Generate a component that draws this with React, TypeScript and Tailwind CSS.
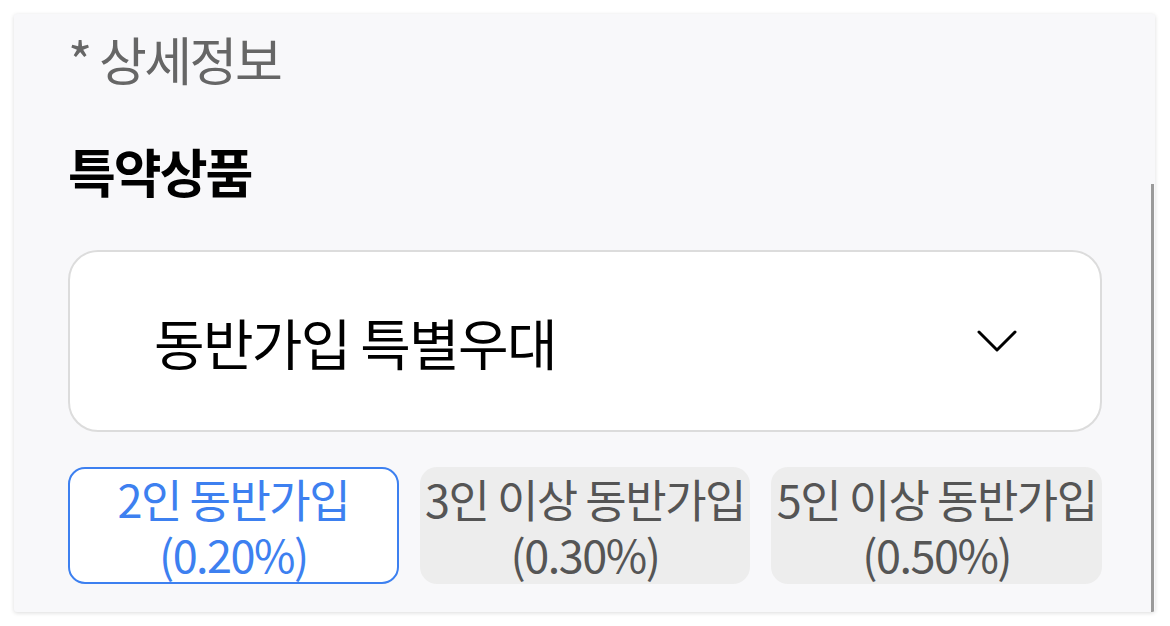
const options = [
  { label: "2인 동반가입", rate: "(0.20%)", selected: true },
  { label: "3인 이상 동반가입", rate: "(0.30%)", selected: false },
  { label: "5인 이상 동반가입", rate: "(0.50%)", selected: false },
];

const font = {
  fontFamily: '"Noto Sans CJK KR", "Noto Sans", sans-serif',
};

export default function App() {
  return (
    <div className="h-[626px] w-[1170px] bg-white p-[14px]" style={font}>
      <div className="relative h-[598px] w-[1141px] overflow-hidden rounded-[3px] bg-[#f8f8fa] pl-[54px] pr-[53px] shadow-[0_1px_4px_rgba(0,0,0,0.14)]">
        <p className="mt-[12px] text-[52px] leading-[66px] tracking-[-2.5px] text-[#666666]">
          * 상세정보
        </p>

        <h2 className="mt-[46px] text-[52px] font-bold leading-[66px] tracking-[-2px] text-black">
          특약상품
        </h2>

        <button
          type="button"
          className="mt-[46px] flex h-[182px] w-full items-center justify-between rounded-[30px] border-2 border-[#dcdcdc] bg-white pl-[84px] pr-[83px]"
        >
          <span className="text-[55px] leading-none tracking-[-1.7px] text-black">
            동반가입 특별우대
          </span>
          <svg
            aria-hidden="true"
            width="40"
            height="24"
            viewBox="0 0 40 24"
            fill="none"
            stroke="black"
            strokeWidth="3"
            strokeLinecap="round"
            strokeLinejoin="round"
          >
            <path d="M2 3 L20 21 L38 3" />
          </svg>
        </button>

        <div className="mt-[35px] grid grid-cols-3 gap-[21px]">
          {options.map((option) => (
            <button
              key={option.label}
              type="button"
              className={`flex h-[117px] flex-col items-center justify-center rounded-[17px] text-[45px] leading-[55px] tracking-[-1.5px] ${
                option.selected
                  ? "border-[2.5px] border-[#3d80f0] bg-white text-[#3d80f0]"
                  : "bg-[#ededed] text-[#555555]"
              }`}
            >
              <span className="whitespace-nowrap">{option.label}</span>
              <span>{option.rate}</span>
            </button>
          ))}
        </div>

        <div className="absolute right-[1px] top-[170px] h-[428px] w-[3px] bg-[#9a9a9a]" />
      </div>
    </div>
  );
}
